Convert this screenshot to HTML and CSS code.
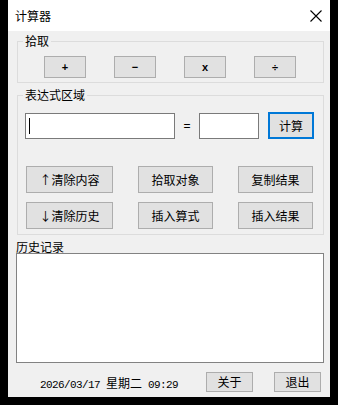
FILE: index.html
```html
<!DOCTYPE html>
<html lang="zh-CN">

<head>
  <meta charset="UTF-8" />
  <meta name="viewport" content="width=device-width, initial-scale=1.0" />
  <title>计算器</title>
  <link rel="stylesheet" href="styles.css">
</head>

<body>
  <div class="window">
    <div class="titlebar">
      <span class="title">计算器</span>
      <svg class="close" width="12" height="12" viewBox="0 0 12 12">
        <path d="M0.5 0.5 L11.5 11.5 M11.5 0.5 L0.5 11.5" stroke="#000" stroke-width="1.1" fill="none" />
      </svg>
    </div>

    <div class="client">
      <fieldset class="group">
        <legend>拾取</legend>
        <div class="op-row">
          <button class="btn op">+</button>
          <button class="btn op">−</button>
          <button class="btn op">x</button>
          <button class="btn op">÷</button>
        </div>
      </fieldset>

      <fieldset class="group group-expr">
        <legend>表达式区域</legend>
        <div class="expr-row">
          <div class="textbox textbox-wide"><span class="caret"></span></div>
          <span class="eq">=</span>
          <div class="textbox textbox-narrow"></div>
          <button class="btn calc">计算</button>
        </div>
        <div class="action-grid">
          <button class="btn">↑清除内容</button>
          <button class="btn">拾取对象</button>
          <button class="btn">复制结果</button>
          <button class="btn">↓清除历史</button>
          <button class="btn">插入算式</button>
          <button class="btn">插入结果</button>
        </div>
      </fieldset>

      <div class="history-label">历史记录</div>
      <div class="history"></div>

      <div class="footer">
        <span class="clock"><span class="mono">2026/03/17 </span>星期二<span class="mono"> 09:29</span></span>
        <button class="btn small about">关于</button>
        <button class="btn small quit">退出</button>
      </div>
    </div>
  </div>
</body>

</html>
```

FILE: styles.css
```css
body {
  margin: 0;
  background-color: #000;
  font-family: "Noto Sans CJK SC", sans-serif;
  font-size: 12px;
  color: #000;
}

.window {
  width: 322px;
  height: 397px;
  margin-left: 8px;
  display: flex;
  flex-direction: column;
}

.titlebar {
  height: 31px;
  flex: none;
  background-color: #fff;
  display: flex;
  align-items: center;
  justify-content: space-between;
  padding: 0 8px 0 7px;
}

.title {
  font-size: 12px;
}

.close {
  display: block;
}

.client {
  flex: 1;
  background-color: #f0f0f0;
  padding: 2px 6px 0 8px;
}

.group {
  margin: 0 0 0 1px;
  padding: 0;
  border: 1px solid #dcdcdc;
  min-width: 0;
}

.group legend {
  margin-left: 5px;
  padding: 0 2px;
  line-height: 16px;
}

.group-expr {
  margin-top: 4px;
}

.btn {
  font-family: "Noto Sans CJK SC", sans-serif;
  font-size: 12px;
  color: #000;
  background-color: #e1e1e1;
  border: 1px solid #adadad;
  padding: 0;
  margin: 0;
  line-height: 1;
}

.op-row {
  display: flex;
  gap: 28px;
  padding: 7px 0 4px 26px;
}

.op {
  width: 42px;
  height: 22px;
  font-family: "Liberation Sans", sans-serif;
  font-weight: bold;
  font-size: 11px;
}

.expr-row {
  display: flex;
  align-items: flex-start;
  padding: 9px 0 0 7px;
}

.textbox {
  height: 26px;
  margin-top: 1px;
  background-color: #fff;
  border: 1px solid #7a7a7a;
  box-sizing: border-box;
  display: flex;
  align-items: center;
  padding-left: 3px;
}

.textbox-wide {
  width: 150px;
}

.textbox-narrow {
  width: 60px;
}

.caret {
  width: 1px;
  height: 16px;
  background-color: #000;
}

.eq {
  width: 24px;
  text-align: center;
  line-height: 28px;
  font-family: "Liberation Sans", sans-serif;
}

.calc {
  width: 46px;
  height: 27px;
  margin-left: 9px;
  border: 2px solid #0078d7;
}

.action-grid {
  display: grid;
  grid-template-columns: 87px 75px 75px;
  grid-auto-rows: 27px;
  column-gap: 25px;
  row-gap: 9px;
  padding: 26px 0 5px 8px;
}

.history-label {
  margin-top: 6px;
  line-height: 12px;
  height: 12px;
}

.history {
  height: 110px;
  background-color: #fff;
  border: 1px solid #828282;
  box-sizing: border-box;
}

.footer {
  display: flex;
  align-items: center;
  margin-top: 9px;
  height: 20px;
}

.clock {
  width: 138px;
  margin-left: 24px;
  white-space: nowrap;
}

.mono {
  font-family: "Liberation Mono", monospace;
  font-size: 11px;
  letter-spacing: -0.6px;
}

.small {
  width: 47px;
  height: 20px;
}

.about {
  margin-left: 28px;
}

.quit {
  margin-left: 21px;
}
```
